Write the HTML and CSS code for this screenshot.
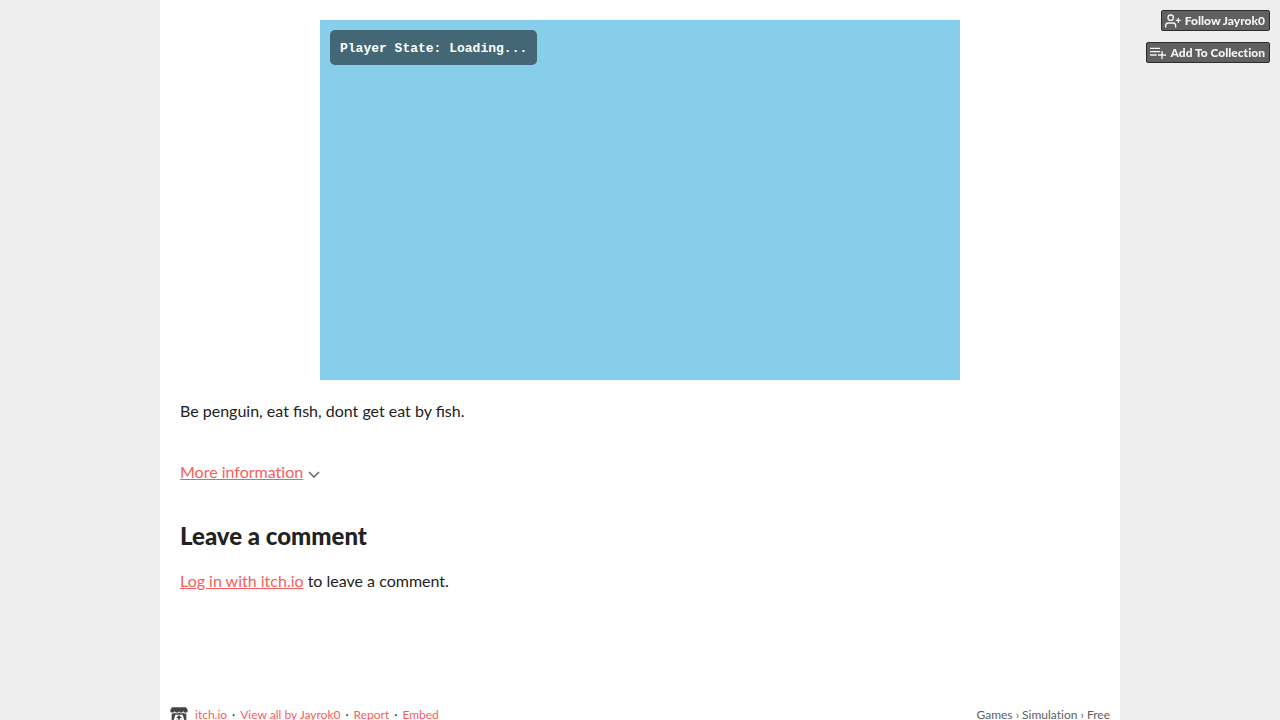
FILE: index.html
```html
<!DOCTYPE html>
<html lang="en">

<head>
    <meta charset="UTF-8">
    <meta name="viewport" content="width=device-width, initial-scale=1.0">
    <title>Penguin by Jayrok0</title>
    <link rel="stylesheet" href="styles.css">
</head>

<body>
    <div class="user_tools">
        <button type="button" class="tool_btn">
            <svg class="icon" width="16" height="16" viewBox="0 0 24 24">
                <path d="M16 21v-2a4 4 0 0 0-4-4H5a4 4 0 0 0-4 4v2"></path>
                <circle cx="8.5" cy="7" r="4"></circle>
                <path d="M20 8v6M23 11h-6"></path>
            </svg>
            <span>Follow Jayrok0</span>
        </button>
        <button type="button" class="tool_btn">
            <svg class="icon icon_list" width="16" height="16" viewBox="0 0 24 24">
                <path d="M0 5h15M0 10h15M0 15h10M18 9v12M12 15h12"></path>
            </svg>
            <span>Add To Collection</span>
        </button>
    </div>

    <div class="wrapper">
        <main class="inner_column">
            <div class="game_frame">
                <div class="player_state">Player State: Loading...</div>
            </div>

            <p class="description">Be penguin, eat fish, dont get eat by fish.</p>

            <div class="more_information">
                <a href="#info">More information</a>
                <svg class="chevron" width="12" height="12" viewBox="0 0 12 12">
                    <path d="M1 4l5 5 5-5"></path>
                </svg>
            </div>

            <section class="comments">
                <h2>Leave a comment</h2>
                <p><a href="#login">Log in with itch.io</a> to leave a comment.</p>
            </section>
        </main>

        <footer class="footer">
            <nav class="footer_links">
                <svg class="logo" width="18" height="16" viewBox="0 0 54 48">
                    <path d="M6 1h42l5 8v3c0 3-3 5-6 5s-6-2-7-5c-1 3-4 5-7 5s-5-2-6-5c-1 3-3 5-6 5s-6-2-7-5c-1 3-4 5-7 5s-6-2-6-5V9z"></path>
                    <path fill-rule="evenodd" d="M5 20c4 0 7-1 9-3 3 3 9 3 12 0h2c3 3 9 3 12 0 2 2 5 3 9 3v26H5zM16 23l-6 20h7l2-5h16l2 5h7l-6-20zM27 24l9 9h-6v4h-6v-4h-6z"></path>
                </svg>
                <a href="#itch">itch.io</a><span>·</span><a href="#all">View all by Jayrok0</a><span>·</span><a href="#report">Report</a><span>·</span><a href="#embed">Embed</a>
            </nav>
            <nav class="breadcrumbs">
                <a href="#games">Games</a> › <a href="#simulation">Simulation</a> › <a href="#free">Free</a>
            </nav>
        </footer>
    </div>
</body>

</html>
```
FILE: styles.css
```css
body {
    margin: 0;
    background-color: #eeeeee;
    color: #222222;
    font-family: Lato, "Liberation Sans", sans-serif;
    font-size: 16px;
    line-height: 24px;
}

a {
    color: #fa5c5c;
    font-variant-ligatures: none;
}

.wrapper {
    max-width: 960px;
    min-height: 100vh;
    margin: 0 auto;
    background-color: #ffffff;
}

.inner_column {
    padding: 20px;
}

.game_frame {
    box-sizing: border-box;
    max-width: 640px;
    aspect-ratio: 16 / 9;
    margin: 0 auto 19px;
    padding: 10px;
    background-color: #87ceeb;
}

.player_state {
    width: fit-content;
    padding: 11px 10px 9px;
    border-radius: 5px;
    background-color: rgba(0, 0, 0, 0.5);
    color: #ffffff;
    font: bold 13px/15px "Liberation Mono", monospace;
}

.description {
    margin: 0 0 37px;
}

.more_information {
    display: flex;
    align-items: center;
    gap: 5px;
}

.chevron {
    margin-top: 4px;
    fill: none;
    stroke: #555555;
    stroke-width: 1.3;
}

.comments {
    margin-top: 36px;
    padding-bottom: 92px;
}

.comments h2 {
    margin: 0 0 17px;
    font-size: 24px;
    font-weight: 900;
    line-height: 32px;
}

.comments p {
    margin: 0;
}

.footer {
    display: flex;
    justify-content: space-between;
    padding: 0 10px 20px;
    font-size: 12px;
    line-height: 20px;
}

.footer a {
    text-decoration: none;
}

.footer_links {
    display: flex;
    align-items: center;
}

.footer_links span {
    margin: 0 5px;
}

.logo {
    margin-right: 7px;
    fill: #444444;
}

.breadcrumbs,
.breadcrumbs a {
    color: #606060;
}

/* follow and collection buttons, over the page in the top corner */
.user_tools {
    position: fixed;
    top: 10px;
    right: 10px;
    display: flex;
    flex-direction: column;
    align-items: flex-end;
    gap: 11px;
}

.tool_btn {
    display: flex;
    align-items: center;
    gap: 4px;
    height: 21px;
    padding: 0 4px 0 3px;
    border: 1px solid #2b2b2b;
    border-radius: 2px;
    background-color: #606060;
    color: #f4f4f4;
    font-family: Lato, "Liberation Sans", sans-serif;
    font-size: 12px;
    font-weight: 900;
    font-variant-ligatures: none;
    cursor: pointer;
}

.icon {
    fill: none;
    stroke: currentColor;
    stroke-width: 2;
    stroke-linecap: round;
    stroke-linejoin: round;
}

.icon_list {
    stroke-linecap: butt;
}
```
